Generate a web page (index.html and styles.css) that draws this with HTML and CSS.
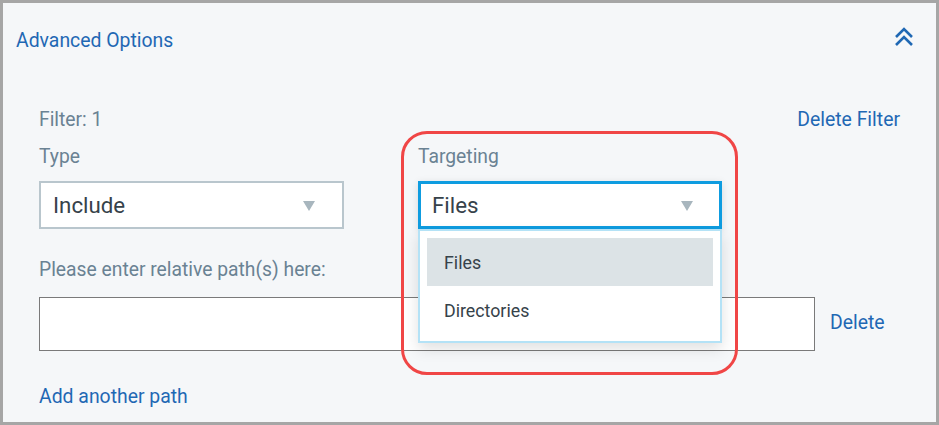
FILE: index.html
```html
<!DOCTYPE html>
<html>
<head>
<meta charset="utf-8">
<link rel="stylesheet" href="styles.css">
</head>
<body>
<div class="panel">
  <div class="header">
    <span class="link title">Advanced Options</span>
    <svg class="chev" width="20" height="20" viewBox="0 0 20 20"><polyline points="2,10 10,2 18,10" fill="none" stroke="#1f68b4" stroke-width="2.6"/><polyline points="2,18 10,10 18,18" fill="none" stroke="#1f68b4" stroke-width="2.6"/></svg>
  </div>
  <div class="filter">
    <div class="filter-top">
      <span class="label">Filter: 1</span>
      <span class="link">Delete Filter</span>
    </div>
    <div class="cols">
      <div class="col">
        <div class="label">Type</div>
        <div class="select">
          <span>Include</span>
          <span class="tri"></span>
        </div>
      </div>
      <div class="col target">
        <div class="highlight"></div>
        <div class="label">Targeting</div>
        <div class="select active">
          <span>Files</span>
          <span class="tri"></span>
          <div class="menu">
            <div class="opt sel">Files</div>
            <div class="opt">Directories</div>
          </div>
        </div>
      </div>
    </div>
    <div class="label path-label">Please enter relative path(s) here:</div>
    <div class="path-row">
      <div class="input"></div>
      <span class="link del">Delete</span>
    </div>
    <div class="link add">Add another path</div>
  </div>
</div>
</body>
</html>
```
FILE: styles.css
```css
html, body {
  margin: 0;
  padding: 0;
}
body {
  font-family: Roboto, "Liberation Sans", sans-serif;
  background: #ffffff;
}
.panel {
  width: 939px;
  height: 425px;
  box-sizing: border-box;
  border: 3px solid #a6a6a6;
  background: #f5f7f9;
  overflow: hidden;
}
.link {
  color: #1f68b4;
  font-size: 19.4px;
}
.header {
  height: 74px;
  display: flex;
  align-items: center;
  justify-content: space-between;
  padding: 0 22px 0 13px;
}
.chev {
  margin-top: -6px;
}
.filter {
  padding: 0 36px;
}
.label {
  color: #6a8293;
  font-size: 19.3px;
  line-height: 24px;
}
.filter-top {
  margin-top: 31px;
  display: flex;
  justify-content: space-between;
  align-items: center;
  line-height: 24px;
}
.cols {
  display: flex;
  gap: 74px;
  margin-top: 13px;
}
.col {
  width: 305px;
  position: relative;
}
.target {
  width: 304px;
}
.select {
  margin-top: 12px;
  height: 48px;
  box-sizing: border-box;
  border: 2px solid #b9c6cd;
  background: #fff;
  display: flex;
  align-items: center;
  justify-content: space-between;
  padding: 0 27px 0 12px;
  font-size: 22.3px;
  color: #36424a;
  position: relative;
}
.select.active {
  border: 3px solid #0e9ce0;
  padding: 0 26px 0 11px;
  box-shadow: 0 2px 8px rgba(0,0,0,0.12);
}
.tri {
  width: 0;
  height: 0;
  border-left: 6px solid transparent;
  border-right: 6px solid transparent;
  border-top: 10px solid #a8b6be;
  margin-top: 2px;
}
.menu {
  position: absolute;
  top: calc(100% + 3px);
  left: -3px;
  right: -3px;
  height: 114px;
  box-sizing: border-box;
  border: 2px solid #b4e2f6;
  background: #fff;
  padding: 7px;
  box-shadow: 0 6px 14px rgba(0,0,0,0.12);
  z-index: 2;
}
.opt {
  height: 48px;
  display: flex;
  align-items: center;
  padding-left: 17px;
  font-size: 17.8px;
  color: #36424a;
}
.opt.sel {
  background: #dce3e6;
}
.highlight {
  position: absolute;
  left: -17px;
  top: -14px;
  width: 337px;
  height: 244px;
  box-sizing: border-box;
  border: 3px solid #f04646;
  border-radius: 26px;
  z-index: 3;
  pointer-events: none;
}
.path-label {
  margin-top: 29px;
}
.path-row {
  margin-top: 15px;
  display: flex;
  align-items: center;
  gap: 15px;
}
.input {
  width: 776px;
  height: 54px;
  box-sizing: border-box;
  border: 1px solid #7a7a7a;
  background: #fff;
}
.del {
  margin-top: -3px;
}
.add {
  margin-top: 34px;
  line-height: 24px;
}
```
